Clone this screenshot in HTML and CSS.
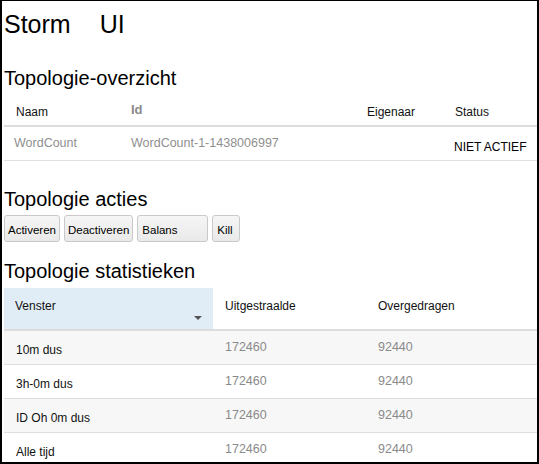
FILE: index.html
```html
<!DOCTYPE html>
<html>
<head>
<meta charset="utf-8">
<link rel="stylesheet" href="styles.css">
</head>
<body>
<div class="frame">
  <h1 class="title"><span>Storm</span><span class="title-ui">UI</span></h1>

  <h2 class="section s-overview">Topologie-overzicht</h2>
  <table class="summary">
    <colgroup><col class="w-name"><col class="w-id"><col class="w-owner"><col></colgroup>
    <thead>
      <tr>
        <th>Naam</th>
        <th class="th-id">Id</th>
        <th>Eigenaar</th>
        <th>Status</th>
      </tr>
    </thead>
    <tbody>
      <tr>
        <td class="muted c-first">WordCount</td>
        <td class="muted">WordCount-1-1438006997</td>
        <td></td>
        <td class="status">NIET ACTIEF</td>
      </tr>
    </tbody>
  </table>

  <h2 class="section s-actions">Topologie acties</h2>
  <div class="actions">
    <button class="btn">Activeren</button>
    <button class="btn">Deactiveren</button>
    <button class="btn btn-balans">Balans</button>
    <button class="btn btn-kill">Kill</button>
  </div>

  <h2 class="section s-stats">Topologie statistieken</h2>
  <table class="stats">
    <colgroup><col class="w-win"><col class="w-emit"><col></colgroup>
    <thead>
      <tr>
        <th class="sorted">Venster<span class="sort-arrow"></span></th>
        <th>Uitgestraalde</th>
        <th>Overgedragen</th>
      </tr>
    </thead>
    <tbody>
      <tr><td class="label">10m dus</td><td class="num">172460</td><td class="num">92440</td></tr>
      <tr><td class="label">3h-0m dus</td><td class="num">172460</td><td class="num">92440</td></tr>
      <tr><td class="label">ID Oh 0m dus</td><td class="num">172460</td><td class="num">92440</td></tr>
      <tr><td class="label">Alle tijd</td><td class="num">172460</td><td class="num">92440</td></tr>
    </tbody>
  </table>
</div>
</body>
</html>
```

FILE: styles.css
```css
html, body {
  margin: 0;
  padding: 0;
  background: #ffffff;
}

.frame {
  box-sizing: border-box;
  width: 539px;
  height: 464px;
  overflow: hidden;
  border-style: solid;
  border-color: #000;
  border-width: 1px 2px 2px 2px;
  padding: 0 0 0 2px;
  font-family: "Liberation Sans", Arial, sans-serif;
  color: #000;
}

.title {
  margin: 9px 0 0 0;
  font-size: 25px;
  line-height: 29px;
  font-weight: normal;
  display: flex;
}

.title-ui {
  margin-left: 29px;
}

.section {
  font-size: 20px;
  line-height: 23px;
  font-weight: normal;
  margin: 0;
}

.s-overview { margin-top: 28px; }
.s-actions { margin-top: 27px; }
.s-stats { margin-top: 18px; }

table {
  border-collapse: separate;
  border-spacing: 0;
  table-layout: fixed;
  width: 100%;
}

/* summary table */
.summary .w-name { width: 115px; }
.summary .w-id { width: 236px; }
.summary .w-owner { width: 88px; }

.summary thead tr { height: 37px; }

.summary th {
  font-weight: normal;
  font-size: 12px;
  line-height: 14px;
  text-align: left;
  vertical-align: bottom;
  padding: 0 0 6px 12px;
  color: #111;
  border-bottom: 2px solid #dddddd;
}

.summary th.th-id {
  font-weight: bold;
  font-size: 13px;
  line-height: 15px;
  color: #8a8a8a;
  padding-bottom: 8px;
}

.summary tbody tr { height: 34px; }

.summary td {
  font-size: 12.5px;
  line-height: 15px;
  padding: 0 0 0 12px;
  vertical-align: middle;
  border-bottom: 1px solid #e0e0e0;
  white-space: nowrap;
}

.summary td.c-first { padding-left: 10px; }

.muted { color: #8f8f8f; }

.summary td.status {
  font-size: 12px;
  line-height: 14px;
  vertical-align: bottom;
  padding: 0 0 6px 11px;
  color: #000;
}

/* actions */
.actions {
  display: flex;
  gap: 4px;
  margin-top: 4px;
}

.btn {
  box-sizing: border-box;
  height: 27px;
  padding: 3px 3px 0 3px;
  font-family: "Liberation Sans", Arial, sans-serif;
  font-size: 11.5px;
  color: #000;
  text-align: left;
  background: linear-gradient(#f6f6f6, #e9e9e9);
  border: 1px solid #c9c9c9;
  border-radius: 3px;
}

.btn-balans { width: 71px; padding-left: 4px; }
.btn-kill { width: 28px; padding-left: 4px; }

/* stats table */
.stats { margin-top: 5px; }

.stats .w-win { width: 209px; }
.stats .w-emit { width: 153px; }

.stats thead tr { height: 43px; }

.stats th {
  position: relative;
  font-weight: normal;
  font-size: 12px;
  line-height: 14px;
  text-align: left;
  vertical-align: top;
  padding: 11px 0 0 12px;
  color: #111;
  border-bottom: 2px solid #dddddd;
}

.stats th.sorted {
  background: #e1edf6;
  padding-left: 11px;
}

.sort-arrow {
  position: absolute;
  right: 11px;
  bottom: 9px;
  width: 0;
  height: 0;
  border-left: 4px solid transparent;
  border-right: 4px solid transparent;
  border-top: 4px solid #555;
}

.stats tbody tr { height: 34px; }
.stats tbody tr:nth-child(odd) { background: #f7f7f7; }

.stats td {
  border-bottom: 1px solid #dedede;
  vertical-align: middle;
  padding: 0 0 0 12px;
  white-space: nowrap;
}

.stats td.label {
  font-size: 12px;
  line-height: 14px;
  padding: 5px 0 0 12px;
  color: #111;
}

.stats td.num {
  font-size: 12.5px;
  line-height: 15px;
  color: #8a8a8a;
}
```
